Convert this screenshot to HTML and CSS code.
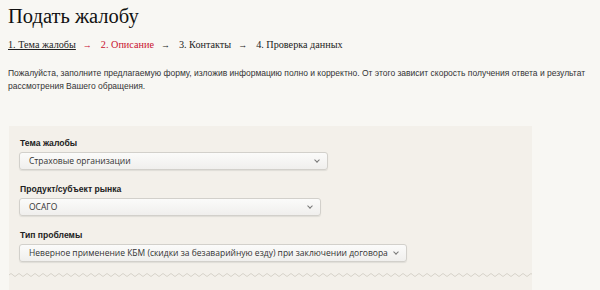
FILE: index.html
```html
<!DOCTYPE html>
<html>
<head>
<meta charset="UTF-8">
<title>Подать жалобу</title>
<link rel="stylesheet" href="styles.css">
</head>
<body>
<h1 class="title">Подать жалобу</h1>
<ol class="steps">
	<li class="done">1. Тема жалобы</li>
	<li class="arrow red">&rarr;</li>
	<li class="current">2. Описание</li>
	<li class="arrow">&rarr;</li>
	<li>3. Контакты</li>
	<li class="arrow">&rarr;</li>
	<li>4. Проверка данных</li>
</ol>
<p class="intro">Пожалуйста, заполните предлагаемую форму, изложив информацию полно и корректно. От этого зависит скорость получения ответа и результат рассмотрения Вашего обращения.</p>
<div class="panel">
	<div class="field">
		<div class="label">Тема жалобы</div>
		<div class="select w1"><span>Страховые организации</span><i class="chev"></i></div>
	</div>
	<div class="field">
		<div class="label">Продукт/субъект рынка</div>
		<div class="select w2"><span>ОСАГО</span><i class="chev"></i></div>
	</div>
	<div class="field last">
		<div class="label">Тип проблемы</div>
		<div class="select"><span>Неверное применение КБМ (скидки за безаварийную езду) при заключении договора</span><i class="chev"></i></div>
	</div>
	<div class="wave"></div>
</div>
</body>
</html>
```

FILE: styles.css
```css
*{
	margin: 0;
	padding: 0;
}
body{
	background: #f8f7f3;
	padding: 0 8px;
	color: #222;
}
.title{
	font: normal 20.5px/24px "Liberation Serif", serif;
	padding-top: 4px;
	color: #111;
}
.steps{
	list-style: none;
	display: flex;
	gap: 7px;
	margin-top: 10px;
	font: 10.2px/14px "Liberation Serif", serif;
	color: #222;
}
.steps .done{
	text-decoration: underline;
}
.steps .current, .steps .red{
	color: #c8102e;
}
.steps .arrow{
	font-weight: bold;
	font-size: 9px;
	padding-right: 2px;
}
.intro{
	margin-top: 15px;
	font: 8.5px/13px "Liberation Sans", Arial, sans-serif;
	color: #333;
	width: 584px;
}
.panel{
	margin-top: 33px;
	margin-left: 1px;
	width: 523px;
	background: #f3f0ea;
	padding: 11px 10px 0;
	box-sizing: border-box;
	height: 200px;
}
.field{
	margin-bottom: 13px;
}
.field.last{
	margin-bottom: 10px;
}
.label{
	font: bold 8.6px/12px "Liberation Sans", Arial, sans-serif;
	color: #222;
	margin: 0 0 3px 1px;
}
.select{
	display: flex;
	align-items: center;
	box-sizing: border-box;
	width: fit-content;
	height: 18px;
	padding: 0 8px 0 9px;
	gap: 6px;
	background: linear-gradient(#fbfbfa, #f0efed);
	border: 1px solid #d2d0cb;
	border-radius: 3px;
	box-shadow: 0 1px 1px rgba(0,0,0,0.08);
	font: 8.5px/16px "Open Sans", "DejaVu Sans", sans-serif;
	color: #333;
}
.select span{
	flex: 1;
}
.w1{
	width: 309px;
}
.w2{
	width: 302px;
}
.chev{
	width: 3px;
	height: 3px;
	border-right: 1px solid #777;
	border-bottom: 1px solid #777;
	transform: rotate(45deg);
	margin-top: -2px;
}
.wave{
	margin: 0 -10px;
	height: 6px;
	background: url("data:image/svg+xml;utf8,<svg xmlns='http://www.w3.org/2000/svg' width='8' height='6'><path d='M0 3 Q2 0 4 3 T8 3' fill='none' stroke='%23d6d2c9' stroke-width='1'/></svg>") repeat-x;
}
```
